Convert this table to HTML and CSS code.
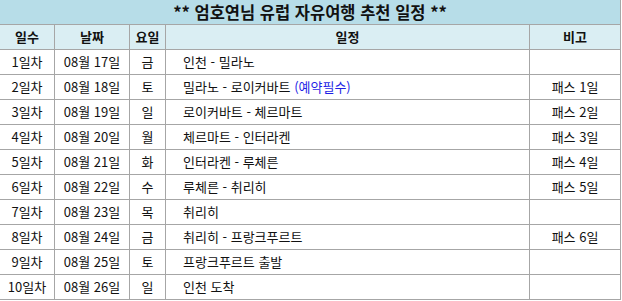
FILE: index.html
```html
<!DOCTYPE html>
<html lang="ko">
<head>
<meta charset="utf-8">
<link rel="stylesheet" href="styles.css">
</head>
<body>
<table class="plan">
  <colgroup>
    <col class="c1"><col class="c2"><col class="c3"><col class="c4"><col class="c5">
  </colgroup>
  <thead>
    <tr class="title-row"><th colspan="5">** 엄호연님 유럽 자유여행 추천 일정 **</th></tr>
    <tr class="head-row"><th>일수</th><th>날짜</th><th>요일</th><th>일정</th><th>비고</th></tr>
  </thead>
  <tbody>
    <tr><td>1일차</td><td>08월 17일</td><td>금</td><td class="sched">인천 - 밀라노</td><td></td></tr>
    <tr><td>2일차</td><td>08월 18일</td><td>토</td><td class="sched">밀라노 - 로이커바트 <span class="must">(예약필수)</span></td><td>패스 1일</td></tr>
    <tr><td>3일차</td><td>08월 19일</td><td>일</td><td class="sched">로이커바트 - 체르마트</td><td>패스 2일</td></tr>
    <tr><td>4일차</td><td>08월 20일</td><td>월</td><td class="sched">체르마트 - 인터라켄</td><td>패스 3일</td></tr>
    <tr><td>5일차</td><td>08월 21일</td><td>화</td><td class="sched">인터라켄 - 루체른</td><td>패스 4일</td></tr>
    <tr><td>6일차</td><td>08월 22일</td><td>수</td><td class="sched">루체른 - 취리히</td><td>패스 5일</td></tr>
    <tr><td>7일차</td><td>08월 23일</td><td>목</td><td class="sched">취리히</td><td></td></tr>
    <tr><td>8일차</td><td>08월 24일</td><td>금</td><td class="sched">취리히 - 프랑크푸르트</td><td>패스 6일</td></tr>
    <tr><td>9일차</td><td>08월 25일</td><td>토</td><td class="sched">프랑크푸르트 출발</td><td></td></tr>
    <tr><td>10일차</td><td>08월 26일</td><td>일</td><td class="sched">인천 도착</td><td></td></tr>
  </tbody>
</table>
</body>
</html>
```

FILE: styles.css
```css
html, body {
  margin: 0;
  padding: 0;
  background: #ffffff;
}
body {
  font-family: "Noto Sans CJK KR", "Noto Sans", sans-serif;
  color: #111111;
}
.plan {
  border-collapse: separate;
  border-spacing: 0;
  table-layout: fixed;
  width: 621px;
}
.c1 { width: 55px; }
.c2 { width: 75px; }
.c3 { width: 36px; }
.c4 { width: 364px; }
.c5 { width: 91px; }
.plan th, .plan td {
  border-right: 1px solid #a6a6a6;
  border-bottom: 1px solid #a6a6a6;
  padding: 0;
  height: 24px;
  box-sizing: border-box;
  text-align: center;
  vertical-align: middle;
  font-size: 13px;
  line-height: 16px;
  white-space: nowrap;
  overflow: hidden;
}
.plan tbody td { height: 25px; }
.title-row th {
  background: #b7dde8;
  font-size: 16.5px;
  line-height: 18px;
  font-weight: bold;
  height: 25px;
}
.head-row th {
  background: #daeef3;
  font-weight: bold;
  height: 25px;
}
.plan td.sched {
  text-align: left;
  padding-left: 17px;
}
.must {
  color: #1f1fe6;
}
```
